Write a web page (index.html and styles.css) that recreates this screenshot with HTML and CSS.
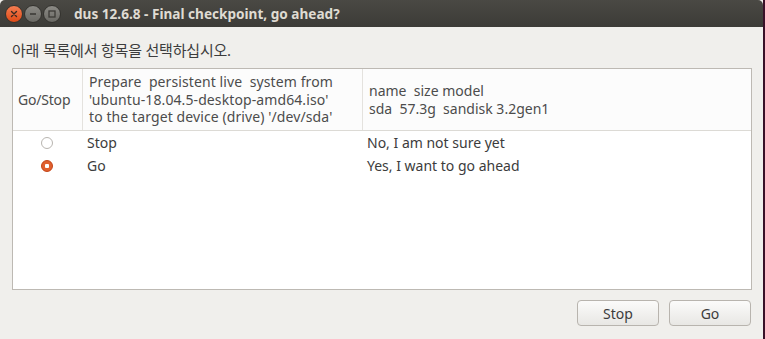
FILE: index.html
```html
<!DOCTYPE html>
<html lang="ko">
<head>
    <meta charset="UTF-8">
    <title>dus 12.6.8 - Final checkpoint, go ahead?</title>
    <link rel="stylesheet" href="styles.css">
</head>
<body>
    <div class="window">
        <div class="titlebar">
            <div class="controls">
                <span class="ctl close">
                    <svg width="8" height="8" viewBox="0 0 8 8"><path d="M1.5 1.5 L6.5 6.5 M6.5 1.5 L1.5 6.5" stroke="#3a2a22" stroke-width="1.4" stroke-linecap="round"/></svg>
                </span>
                <span class="ctl">
                    <svg width="8" height="8" viewBox="0 0 8 8"><path d="M1 4 H7" stroke="#3c3b37" stroke-width="1.6"/></svg>
                </span>
                <span class="ctl">
                    <svg width="8" height="8" viewBox="0 0 8 8"><rect x="1" y="1" width="6" height="6" fill="none" stroke="#3c3b37" stroke-width="1.3"/></svg>
                </span>
            </div>
            <div class="title">dus 12.6.8 - Final checkpoint, go ahead?</div>
        </div>

        <div class="content">
            <p class="prompt">아래 목록에서 항목을 선택하십시오.</p>

            <div class="list">
                <div class="list-head">
                    <div class="col col-choice">Go/Stop</div>
                    <div class="col col-task">Prepare &nbsp;persistent live &nbsp;system from<br>'ubuntu-18.04.5-desktop-amd64.iso'<br>to the target device (drive) '/dev/sda'</div>
                    <div class="col col-info">name &nbsp;size model<br>sda &nbsp;57.3g &nbsp;sandisk 3.2gen1</div>
                </div>

                <div class="row">
                    <div class="cell cell-radio"><span class="radio"></span></div>
                    <div class="cell">Stop</div>
                    <div class="cell">No, I am not sure yet</div>
                </div>
                <div class="row">
                    <div class="cell cell-radio"><span class="radio checked"></span></div>
                    <div class="cell">Go</div>
                    <div class="cell">Yes, I want to go ahead</div>
                </div>
            </div>

            <div class="actions">
                <button>Stop</button>
                <button>Go</button>
            </div>
        </div>
    </div>
</body>
</html>
```

FILE: styles.css
```css
* {
    box-sizing: border-box;
}

body {
    margin: 0;
    background-color: #3a1028;
    font-family: 'Noto Sans', 'Noto Sans CJK KR', sans-serif;
    font-size: 14px;
    color: #3c3c3c;
}

.window {
    width: 763px;
    height: 339px;
    background-color: #f0efec;
    display: flex;
    flex-direction: column;
}

.titlebar {
    height: 27px;
    background: linear-gradient(#4a4944, #3c3b37);
    border-radius: 5px 5px 0 0;
    display: flex;
    align-items: center;
    padding-left: 5px;
}

.controls {
    display: flex;
    gap: 1px;
}

.ctl {
    width: 18px;
    height: 18px;
    border-radius: 50%;
    background: linear-gradient(#8b8a85, #6a6964);
    border: 1px solid #34332f;
    display: flex;
    align-items: center;
    justify-content: center;
}

.ctl.close {
    background: linear-gradient(#f37d52, #df4a16);
}

.title {
    margin-left: 13px;
    color: #dfdbd2;
    font-weight: bold;
    font-size: 13.6px;
}

.content {
    flex: 1;
    padding: 0 11px 0 12px;
    display: flex;
    flex-direction: column;
}

.prompt {
    margin: 14px 0 9px;
    line-height: 18px;
    font-size: 15px;
    letter-spacing: -0.2px;
}

.list {
    height: 222px;
    background-color: #fff;
    border: 1px solid #bdb9b3;
}

.list-head,
.row {
    display: grid;
    grid-template-columns: 69px 280px 1fr;
}

.list-head {
    height: 62px;
    background-color: #fcfcfc;
    border-bottom: 1px solid #dcdad5;
    color: #4c4c4c;
}

.col {
    display: flex;
    align-items: center;
    line-height: 17.5px;
    padding-left: 6px;
}

.col-task,
.col-info {
    border-left: 1px solid #e4e2de;
}

.col-choice {
    padding-left: 5px;
    letter-spacing: -0.2px;
}

.col-task {
    letter-spacing: 0.1px;
}

.row {
    height: 23px;
    align-items: center;
}

.cell {
    padding-left: 5px;
}

.cell-radio {
    display: flex;
    justify-content: center;
    padding-left: 0;
    padding-right: 2px;
}

.radio {
    width: 12px;
    height: 12px;
    border-radius: 50%;
    border: 1px solid #b8b5b0;
    background: #fff;
}

.radio.checked {
    border-color: #c34113;
    background: radial-gradient(circle, #fff 0 2px, #e0602f 2.5px);
}

.actions {
    display: flex;
    justify-content: flex-end;
    gap: 10px;
    margin-top: 10px;
    padding-right: 1px;
}

button {
    width: 82px;
    height: 26px;
    border: 1px solid #b8b4ae;
    border-radius: 4px;
    background: linear-gradient(#fbfbfa, #e8e7e4);
    font-family: 'Noto Sans', sans-serif;
    font-size: 14px;
    color: #3c3c3c;
}
```
